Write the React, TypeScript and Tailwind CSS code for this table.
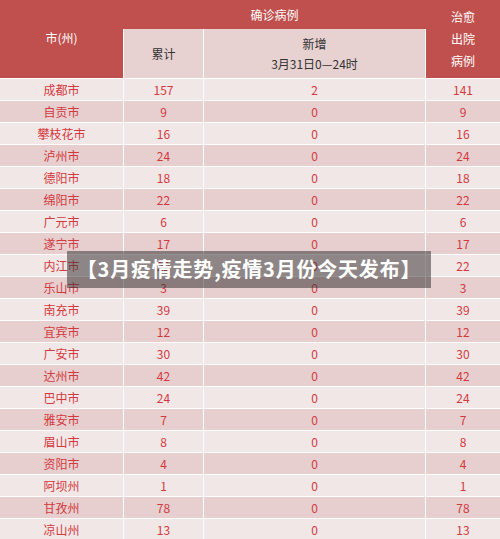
import React from "react";

const rows: [string, string, string, string][] = [
  ["成都市", "157", "2", "141"],
  ["自贡市", "9", "0", "9"],
  ["攀枝花市", "16", "0", "16"],
  ["泸州市", "24", "0", "24"],
  ["德阳市", "18", "0", "18"],
  ["绵阳市", "22", "0", "22"],
  ["广元市", "6", "0", "6"],
  ["遂宁市", "17", "0", "17"],
  ["内江市", "22", "0", "22"],
  ["乐山市", "3", "0", "3"],
  ["南充市", "39", "0", "39"],
  ["宜宾市", "12", "0", "12"],
  ["广安市", "30", "0", "30"],
  ["达州市", "42", "0", "42"],
  ["巴中市", "24", "0", "24"],
  ["雅安市", "7", "0", "7"],
  ["眉山市", "8", "0", "8"],
  ["资阳市", "4", "0", "4"],
  ["阿坝州", "1", "0", "1"],
  ["甘孜州", "78", "0", "78"],
  ["凉山州", "13", "0", "13"],
];

export default function App() {
  return (
    <div
      className="relative w-[500px] h-[539px] overflow-hidden bg-white text-[12px]"
      style={{ fontFamily: '"Noto Sans CJK SC", "Noto Sans", sans-serif' }}
    >
      <div className="flex h-[78px] bg-[#c0504d] text-white">
        <div className="w-[123px] flex items-center justify-center pb-[3px]">市(州)</div>
        <div className="w-[303px] flex flex-col">
          <div className="h-[29px] flex items-center justify-center">确诊病例</div>
          <div className="flex-1 flex gap-px bg-white px-px text-[#333]">
            <div className="w-[79px] bg-[#e7d1d1] flex items-center justify-center">累计</div>
            <div className="flex-1 bg-[#e7d1d1] flex flex-col items-center justify-center leading-[20px]">
              <span>新增</span>
              <span>3月31日0—24时</span>
            </div>
          </div>
        </div>
        <div className="flex-1 flex flex-col items-center justify-center leading-[22px] pb-[1px]">
          <span>治愈</span>
          <span>出院</span>
          <span>病例</span>
        </div>
      </div>
      <div className="flex flex-col gap-px bg-white pt-px">
        {rows.map((r, i) => {
          const bg = i % 2 === 0 ? "bg-[#f2e7e7]" : "bg-[#e7cfd0]";
          return (
            <div
              key={i}
              className="grid grid-cols-[123px_79px_221px_1fr] gap-px h-[21px] text-[#d2393d]"
            >
              {r.map((c, j) => (
                <div key={j} className={`${bg} flex items-center justify-center`}>
                  {c}
                </div>
              ))}
            </div>
          );
        })}
      </div>
      <div className="absolute left-[67px] top-[251px] w-[364px] h-[37px] bg-[rgba(60,55,55,0.55)] flex items-center justify-center text-white font-bold text-[20px] tracking-[0.8px] pb-[1px]">
        【3月疫情走势,疫情3月份今天发布】
      </div>
    </div>
  );
}
